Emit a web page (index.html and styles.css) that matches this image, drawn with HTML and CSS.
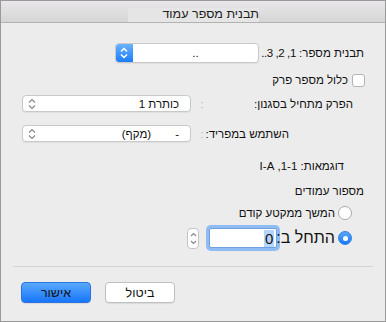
FILE: index.html
```html
<!DOCTYPE html>
<html lang="he">
<head>
  <meta charset="UTF-8">
  <title>תבנית מספר עמוד</title>
  <link rel="stylesheet" href="styles.css">
</head>
<body>

  <div class="window">
    <div class="titlebar">
      <span class="title">תבנית מספר עמוד</span>
    </div>

    <div class="content" dir="rtl">
      <div class="row row-format">
        <span class="label label-format">תבנית מספר: <span class="digits">1, 2, 3..</span></span>
        <div class="popup popup-main">
          <span class="popup-text">..</span>
          <span class="arrows arrows-blue">
            <svg width="8" height="12" viewBox="0 0 8 12"><polyline points="1,4.5 4,1.5 7,4.5" /><polyline points="1,7.5 4,10.5 7,7.5" /></svg>
          </span>
        </div>
      </div>

      <div class="row row-chapter">
        <span class="checkbox"></span>
        <span class="label">כלול מספר פרק</span>
      </div>

      <div class="row row-style">
        <span class="label label-style">הפרק מתחיל בסגנון:</span>
        <span class="colon">:</span>
        <div class="popup popup-small">
          <span class="popup-text">כותרת 1</span>
          <span class="arrows">
            <svg width="8" height="12" viewBox="0 0 8 12"><polyline points="1,4.5 4,1.5 7,4.5" /><polyline points="1,7.5 4,10.5 7,7.5" /></svg>
          </span>
        </div>
      </div>

      <div class="row row-separator">
        <span class="label label-separator">השתמש במפריד:</span>
        <span class="colon">:</span>
        <div class="popup popup-small">
          <span class="popup-text"><span class="dash">-</span>(מקף)</span>
          <span class="arrows">
            <svg width="8" height="12" viewBox="0 0 8 12"><polyline points="1,4.5 4,1.5 7,4.5" /><polyline points="1,7.5 4,10.5 7,7.5" /></svg>
          </span>
        </div>
      </div>

      <div class="row row-examples">
        <span class="label">דוגמאות: 1-1, I-A</span>
      </div>

      <div class="row row-heading">
        <span class="label">מספור עמודים</span>
      </div>

      <div class="row row-continue">
        <span class="radio"></span>
        <span class="label">המשך ממקטע קודם</span>
      </div>

      <div class="row row-start">
        <span class="radio radio-on"></span>
        <span class="label label-start">התחל ב:</span>
        <div class="number-input">
          <span class="selected">0</span>
        </div>
        <span class="stepper">
          <svg width="7" height="15" viewBox="0 0 7 15"><polyline points="1,5 3.5,2.5 6,5" /><polyline points="1,10 3.5,12.5 6,10" /></svg>
        </span>
      </div>

      <div class="divider"></div>

      <div class="buttons">
        <button class="btn">ביטול</button>
        <button class="btn btn-primary">אישור</button>
      </div>
    </div>
  </div>

</body>
</html>
```

FILE: styles.css
```css
* {
  box-sizing: border-box;
}

body {
  margin: 0;
  font-family: 'Liberation Sans', 'DejaVu Sans', sans-serif;
  font-size: 11.5px;
  color: #111;
  background: #ececec;
}

.window {
  width: 386px;
  height: 322px;
  border: 1px solid #9a9a9a;
  background: #ececec;
}

.titlebar {
  height: 22px;
  display: flex;
  justify-content: flex-end;
  align-items: flex-end;
  padding-right: 126px;
  background: linear-gradient(#e9e7e9, #d6d5d6);
  border-bottom: 1px solid #b2b2b2;
}

.title {
  width: 131px;
  height: 14px;
  line-height: 12px;
  font-size: 12.5px;
  color: #222;
  text-align: right;
  background: #e6e5e6;
  white-space: nowrap;
}

.content {
  padding: 0 20px 0 20px;
}

.row {
  display: flex;
  align-items: center;
}

.label {
  white-space: nowrap;
}

/* popups */
.popup {
  display: flex;
  align-items: center;
  background: #fff;
  border: 1px solid #c9c9c9;
  border-radius: 4px;
  box-shadow: 0 1px 1px rgba(0, 0, 0, 0.06);
}

.arrows {
  display: flex;
  align-items: center;
  justify-content: center;
  margin-right: auto;
  width: 17px;
  height: 100%;
}

.arrows svg polyline,
.stepper svg polyline {
  fill: none;
  stroke: #8a8a8a;
  stroke-width: 1.2;
}

.arrows-blue {
  background: linear-gradient(#6ab2fb, #1c7dfa);
  border-radius: 3px 0 0 3px;
}

.arrows-blue svg polyline {
  stroke: #fff;
  stroke-width: 1.5;
}

.row-format {
  margin-top: 20px;
  height: 20px;
}

.label-format {
  width: 105px;
  margin-right: 1px;
}

.digits {
  letter-spacing: -0.4px;
}

.popup-main {
  width: 144px;
  height: 20px;
}

.popup-main .popup-text {
  width: 126px;
  text-align: center;
}

.popup-small {
  width: 169px;
  height: 17px;
  margin-right: 6px;
}

.popup-small .popup-text {
  padding-right: 11px;
}

.dash {
  margin-left: 24px;
}

.colon {
  width: 10px;
  text-align: center;
  color: #a8bcd0;
}

.row-chapter {
  margin-top: 10px;
  height: 14px;
}

.checkbox {
  width: 13px;
  height: 13px;
  margin-left: 4px;
  background: #fff;
  border: 1px solid #b4b4b4;
  border-radius: 3px;
}

.row-style {
  margin-top: 8px;
  margin-right: 12px;
  height: 17px;
}

.label-style {
  width: 146px;
}

.row-separator {
  margin-top: 13px;
  margin-right: 12px;
  height: 17px;
}

.label-separator {
  width: 146px;
  padding-right: 64px;
}

.row-examples {
  margin-top: 17px;
  margin-right: 21px;
  height: 14px;
}

.row-heading {
  margin-top: 11px;
  margin-right: 1px;
  height: 14px;
}

/* radios */
.radio {
  width: 14px;
  height: 14px;
  margin-left: 3px;
  background: #fff;
  border: 1px solid #a9a9a9;
  border-radius: 50%;
}

.radio-on {
  display: flex;
  align-items: center;
  justify-content: center;
  background: linear-gradient(#5aa6fb, #1a79f7);
  border-color: #2f7fe6;
}

.radio-on::after {
  content: '';
  width: 5px;
  height: 5px;
  background: #fff;
  border-radius: 50%;
}

.row-continue {
  margin-top: 7px;
  margin-right: 13px;
  height: 15px;
}

.row-start {
  margin-top: 5px;
  margin-right: 13px;
  height: 26px;
}

.label-start {
  position: relative;
  z-index: 1;
  font-size: 16px;
}

.number-input {
  width: 68px;
  height: 20px;
  margin-right: -1px;
  display: flex;
  align-items: center;
  background: #fff;
  border: 1px solid #6f9fdc;
  box-shadow: 0 0 0 3px #8fbcf2;
  border-radius: 2px;
  font-size: 15px;
}

.selected {
  margin-right: 2px;
  padding: 0 1px;
  line-height: 17px;
  background: #b4d5fe;
}

.stepper {
  display: flex;
  align-items: center;
  justify-content: center;
  width: 12px;
  height: 21px;
  margin-right: 10px;
  background: #fff;
  border: 1px solid #c4c4c4;
  border-radius: 4px;
}

.divider {
  margin: 15px -8px 0;
  height: 1px;
  background: #d2d2d2;
}

.buttons {
  display: flex;
  justify-content: flex-end;
  gap: 14px;
  margin-top: 15px;
}

.btn {
  width: 70px;
  height: 21px;
  padding: 0;
  font-family: inherit;
  font-size: 12.5px;
  color: #111;
  background: #fff;
  border: 1px solid #c0c0c0;
  border-radius: 4px;
  box-shadow: 0 1px 1px rgba(0, 0, 0, 0.08);
}

.btn-primary {
  background: linear-gradient(#5aa9fd, #1775fa);
  border-color: #2b74e0;
}
```
